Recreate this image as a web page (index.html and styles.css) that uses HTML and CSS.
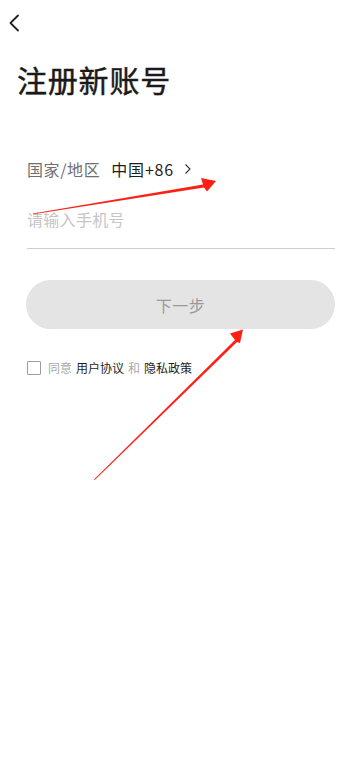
FILE: index.html
```html
<!DOCTYPE html>
<html lang="zh-CN">
<head>
<meta charset="utf-8">
<meta name="viewport" content="width=device-width, initial-scale=1">
<title>注册新账号</title>
<link rel="stylesheet" href="styles.css">
</head>
<body>
<div class="page">
  <div class="topbar">
    <svg class="back" width="12" height="18" viewBox="0 0 12 18"><path d="M10 1.5 L2.5 9 L10 16.5" fill="none" stroke="#222" stroke-width="1.8" stroke-linecap="round" stroke-linejoin="round"/></svg>
  </div>
  <h1 class="title">注册新账号</h1>
  <div class="form">
    <div class="country">
      <span class="label">国家/地区</span>
      <span class="value">中国+86</span>
      <svg class="chev" width="8" height="12" viewBox="0 0 8 12"><path d="M1.5 1.5 L6 6 L1.5 10.5" fill="none" stroke="#333" stroke-width="1.1"/></svg>
    </div>
    <div class="phone">
      <span class="placeholder">请输入手机号</span>
    </div>
    <div class="btn">下一步</div>
    <div class="agree">
      <span class="box"></span>
      <span class="muted">同意</span>
      <span class="link">用户协议</span>
      <span class="muted">和</span>
      <span class="link">隐私政策</span>
    </div>
  </div>
  <svg class="annot" width="356" height="778" viewBox="0 0 356 778">
    <polygon fill="#ff1f14" points="33,213.5 203,184.5 201,178 216,181 207,191.5 204,187.5 33,214.3"/>
    <polygon fill="#ff1f14" points="94,479.5 235,340 230,333.5 243,329.5 240,343 237,342 94.8,480"/>
  </svg>
</div>
</body>
</html>
```
FILE: styles.css
```css
html, body {
  margin: 0;
  padding: 0;
  background: #ffffff;
}
body {
  font-family: "Noto Sans CJK SC", "Noto Sans", "Liberation Sans", sans-serif;
  color: #222;
}
.page {
  position: relative;
  width: 356px;
  height: 778px;
  overflow: hidden;
}
.topbar {
  height: 46px;
  padding: 0 0 0 8px;
  display: flex;
  align-items: center;
}
.back {
  display: block;
  margin-top: -1px;
}
.title {
  margin: 0;
  padding: 13px 0 0 17px;
  font-size: 30px;
  font-weight: 400;
  line-height: 40px;
  letter-spacing: 0.8px;
  color: #1a1a1a;
  -webkit-text-stroke: 0.45px #1a1a1a;
}
.form {
  padding: 0 21px 0 27px;
}
.country {
  margin-top: 58px;
  height: 24px;
  display: flex;
  align-items: center;
  font-size: 16px;
}
.label {
  color: #707070;
  letter-spacing: 0.6px;
}
.value {
  margin-left: 11px;
  color: #1e1e1e;
  letter-spacing: 0.8px;
}
.chev {
  margin-left: 10px;
  display: block;
}
.phone {
  margin-top: 26px;
  height: 41px;
  border-bottom: 1px solid #cfcfcf;
  font-size: 16px;
  line-height: 24px;
}
.placeholder {
  color: #c6c6c6;
  letter-spacing: 0.3px;
}
.btn {
  margin-top: 31px;
  height: 49px;
  border-radius: 25px;
  background: #e4e4e4;
  color: #9a9a9a;
  font-size: 16px;
  letter-spacing: 0.5px;
  display: flex;
  align-items: center;
  justify-content: center;
  margin-left: -1px;
}
.agree {
  margin-top: 31px;
  display: flex;
  align-items: center;
  font-size: 12px;
  line-height: 16px;
}
.box {
  width: 12px;
  height: 12px;
  border: 1px solid #9d9d9d;
  border-radius: 1px;
  margin-right: 7px;
}
.muted {
  color: #a8a8a8;
  margin-right: 4px;
}
.link {
  color: #1e1e1e;
  margin-right: 4px;
}
.annot {
  position: absolute;
  left: 0;
  top: 0;
  pointer-events: none;
}
```
